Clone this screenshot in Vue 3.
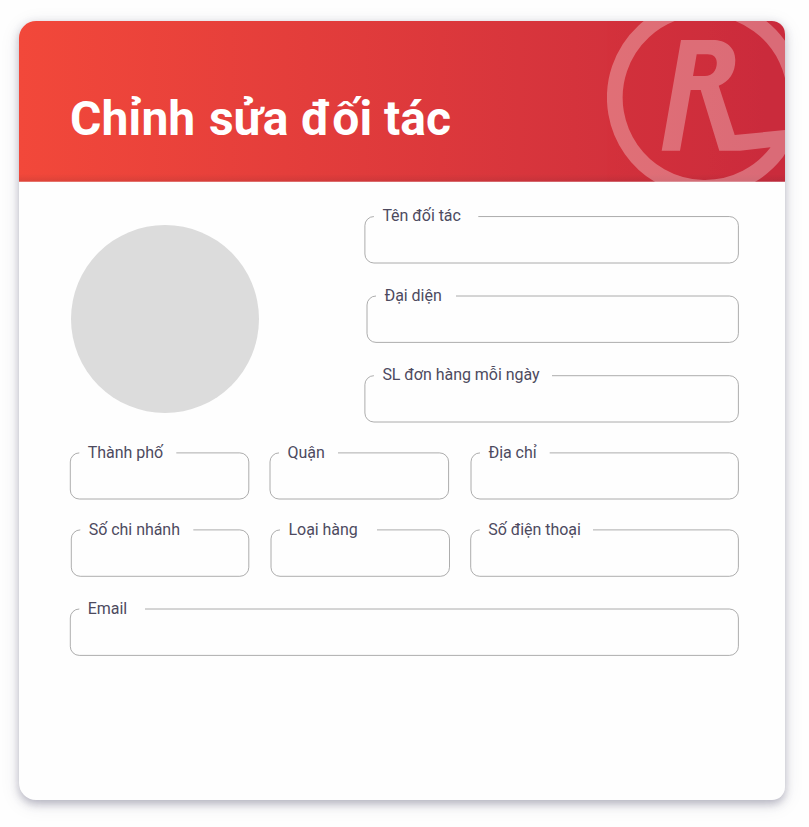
<script setup>
const partner = [
  { label: 'Tên đối tác', w: 376, l: 0.9, r: 374.4, t: 0.55, b: 47, gap: 114.3, top: -10 },
  { label: 'Đại diện', w: 376, l: 3, r: 374.4, t: 0, b: 46.4, gap: 92, top: -10 },
  { label: 'SL đơn hàng mỗi ngày', w: 376, l: 0.9, r: 374.4, t: -0.3, b: 46, gap: 188, top: -11 },
]
const address = [
  { label: 'Thành phố', w: 180, l: 0.3, r: 178.8, t: -0.1, b: 46, gap: 106.3, top: -10 },
  { label: 'Quận', w: 180, l: 0, r: 178.6, t: -0.1, b: 46, gap: 68, top: -10 },
  { label: 'Địa chỉ', w: 269, l: 1, r: 268.4, t: -0.1, b: 46, gap: 79.7, top: -10 },
]
const contact = [
  { label: 'Số chi nhánh', w: 180, l: 1.3, r: 178.8, t: -0.1, b: 46.3, gap: 123.3, top: -10 },
  { label: 'Loại hàng', w: 180, l: 1, r: 179.5, t: -0.1, b: 46.3, gap: 107, top: -10 },
  { label: 'Số điện thoại', w: 269, l: 0.7, r: 268.4, t: -0.1, b: 46.3, gap: 123, top: -10 },
]
const email = [{ label: 'Email', w: 669, l: 0.3, r: 668.4, t: 0, b: 46.4, gap: 75, top: -10 }]

const rows = [address, contact, email]

const outline = ({ l, r, t, b, gap }) =>
  `M${gap} ${t}H${r - 9}a9 9 0 0 1 9 9V${b - 9}a9 9 0 0 1 -9 9H${l + 9}a9 9 0 0 1 -9 -9V${t + 9}a9 9 0 0 1 9 -9`
</script>

<template>
  <main class="page">
    <section class="card">
      <header class="head">
        <h1>Chỉnh <span class="mid">sửa</span> <span class="wide">đ</span>ối tác</h1>
        <svg class="logo" width="178" height="161" viewBox="607 21 178 161">
          <g opacity="0.3">
            <path class="ring" d="M776.7 152.3A90.2 90.2 0 1 1 795.2 97.7" />
            <path
              class="mark"
              d="M681 40H712.5C726 40 735.3 47.5 735.3 60C735.3 73 729 81.5 718.7 85.7L734.7 135L800 128.6L783 157L772 160L770.3 147.3L740 150.7H719.3L700.7 90H690.7L680 150.7H661.7ZM696.7 54.3L693 76H705C712.5 76 716.8 70 716.8 63C716.8 57.5 713.5 54.3 707.5 54.3Z"
            />
          </g>
        </svg>
      </header>

      <form class="body" @submit.prevent>
        <div class="top">
          <div class="avatar"></div>
          <div class="stack">
            <label v-for="f in partner" :key="f.label" class="field">
              <svg :width="f.w" height="48"><path :d="outline(f)" /></svg>
              <span :style="{ left: f.l + 17.5 + 'px', top: f.top + 'px' }">{{ f.label }}</span>
            </label>
          </div>
        </div>
        <div v-for="(row, i) in rows" :key="i" class="row">
          <label v-for="f in row" :key="f.label" class="field">
            <svg :width="f.w" height="48"><path :d="outline(f)" /></svg>
            <span :style="{ left: f.l + 17.5 + 'px', top: f.top + 'px' }">{{ f.label }}</span>
          </label>
        </div>
      </form>
    </section>
  </main>
</template>

<style>
body {
  background: #fefefe;
}
</style>

<style scoped>
.page {
  box-sizing: border-box;
  width: 809px;
  height: 827px;
  padding: 21px 23.7px 27px 19.3px;
  overflow: hidden;
  font-family: Roboto, sans-serif;
}
.card {
  height: 779.3px;
  border-radius: 17px 13px 13px 17px;
  background: #fefefe;
  overflow: hidden;
  box-shadow: 0 3.5px 9px rgba(50, 46, 82, 0.3), 0 4px 20px rgba(50, 46, 82, 0.1);
}
.head {
  display: flex;
  justify-content: space-between;
  height: 160.6px;
  background:
    linear-gradient(to top, rgba(255, 255, 255, 0.25) 1px, transparent 1px),
    linear-gradient(to top, rgba(90, 40, 50, 0.14), transparent 8px),
    linear-gradient(to right, #f2483a, #ca2b3d);
}
h1 {
  margin: 69.7px 0 0 50.7px;
  font-size: 48px;
  line-height: 56px;
  font-weight: 700;
  color: #fff;
  white-space: nowrap;
}
.mid {
  margin: 0 0.6px 0 1.8px;
}
.wide {
  margin-right: 1.2px;
}
.logo {
  flex: none;
}
.ring {
  fill: none;
  stroke: #fff;
  stroke-width: 15.7;
}
.mark {
  fill: #fff;
  fill-rule: evenodd;
}
.body {
  padding: 34.1px 0 0 50.7px;
}
.top {
  display: flex;
  justify-content: space-between;
  width: 670px;
}
.avatar {
  width: 188.4px;
  height: 188.4px;
  margin: 9px 0 0 1px;
  border-radius: 50%;
  background: #dcdcdc;
}
.stack {
  display: flex;
  flex-direction: column;
  gap: 32px;
  width: 376px;
  padding-top: 0.3px;
}
.row {
  display: flex;
  gap: 20px;
  margin-top: 29px;
}
.row:last-child {
  margin-top: 31px;
}
.field {
  position: relative;
  display: block;
  height: 48px;
}
.field svg {
  display: block;
  overflow: visible;
}
.field path {
  fill: none;
  stroke: #929292;
  stroke-width: 0.75;
}
.field span {
  position: absolute;
  font-size: 16px;
  line-height: 19px;
  letter-spacing: -0.04px;
  color: #4d4a5e;
  white-space: nowrap;
}
</style>
